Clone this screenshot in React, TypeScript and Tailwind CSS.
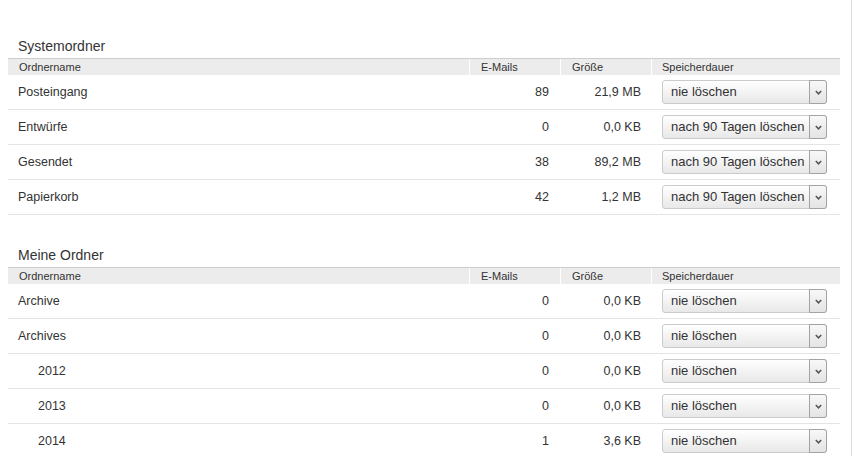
import { ChangeEvent, useState } from "react";

type Folder = {
  name: string;
  mails: number;
  size: string;
  retention: string;
  depth?: number;
};

const RETENTION_OPTIONS = [
  "nie löschen",
  "nach 30 Tagen löschen",
  "nach 90 Tagen löschen",
  "nach 180 Tagen löschen",
];

const systemFolders: Folder[] = [
  { name: "Posteingang", mails: 89, size: "21,9 MB", retention: "nie löschen" },
  { name: "Entwürfe", mails: 0, size: "0,0 KB", retention: "nach 90 Tagen löschen" },
  { name: "Gesendet", mails: 38, size: "89,2 MB", retention: "nach 90 Tagen löschen" },
  { name: "Papierkorb", mails: 42, size: "1,2 MB", retention: "nach 90 Tagen löschen" },
];

const myFolders: Folder[] = [
  { name: "Archive", mails: 0, size: "0,0 KB", retention: "nie löschen" },
  { name: "Archives", mails: 0, size: "0,0 KB", retention: "nie löschen" },
  { name: "2012", mails: 0, size: "0,0 KB", retention: "nie löschen", depth: 1 },
  { name: "2013", mails: 0, size: "0,0 KB", retention: "nie löschen", depth: 1 },
  { name: "2014", mails: 1, size: "3,6 KB", retention: "nie löschen", depth: 1 },
];

const COLS = "grid grid-cols-[461px_91px_91px_189px]";

function RetentionSelect({ initial }: { initial: string }) {
  const [value, setValue] = useState(initial);

  return (
    <div className="relative h-[24px] w-[165px]">
      <select
        value={value}
        onChange={(e: ChangeEvent<HTMLSelectElement>) => setValue(e.target.value)}
        className="h-full w-full appearance-none rounded-[3px] border border-[#cbcbcb] bg-linear-to-b from-white to-[#e8e8e8] pl-[8px] pr-[20px] text-[13px] text-[#333] outline-none"
      >
        {RETENTION_OPTIONS.map((opt) => (
          <option key={opt}>{opt}</option>
        ))}
      </select>
      {/* dropdown button drawn over the right edge */}
      <span className="pointer-events-none absolute top-0 right-0 bottom-0 flex w-[18px] items-center justify-center rounded-r-[3px] border border-[#a3a3a3] bg-linear-to-b from-[#f8f8f8] to-[#e4e4e4]">
        <svg width="7" height="5" viewBox="0 0 7 5" fill="none">
          <path d="M0.8 0.9 L3.5 3.8 L6.2 0.9" stroke="#555" strokeWidth="1.5" />
        </svg>
      </span>
    </div>
  );
}

function FolderTable({ title, folders, className }: { title: string; folders: Folder[]; className?: string }) {
  return (
    <section className={className}>
      <h2 className="mb-[2px] pl-[10px] text-[14px] leading-[20px] font-normal text-[#333]">{title}</h2>

      <div className={`${COLS} h-[17px] border-t border-[#cdcdcd] bg-[#ececec] text-[11px] leading-[16px] text-[#333]`}>
        <div className="pl-[11px]">Ordnername</div>
        <div className="border-l border-white pl-[11px]">E-Mails</div>
        <div className="border-l border-white pl-[11px]">Größe</div>
        <div className="border-l border-white pl-[10px]">Speicherdauer</div>
      </div>

      {folders.map((f) => (
        <div
          key={f.name}
          className={`${COLS} h-[35px] items-center border-b border-[#e4e4e4] text-[12.5px] text-[#333]`}
        >
          <div className={f.depth ? "pl-[30px]" : "pl-[10px]"}>{f.name}</div>
          <div className="pr-[11px] text-right">{f.mails}</div>
          <div className="pr-[10px] text-right">{f.size}</div>
          <div className="pl-[11px]">
            <RetentionSelect initial={f.retention} />
          </div>
        </div>
      ))}
    </section>
  );
}

export default function App() {
  return (
    <div
      className="h-[456px] w-[853px] overflow-hidden bg-white"
      style={{ fontFamily: '"Liberation Sans", Arial, sans-serif' }}
    >
      <div className="h-full w-[852px] border-r border-[#dadada] pt-[36px] pl-[8px]">
        <div className="w-[832px]">
          <FolderTable title="Systemordner" folders={systemFolders} />
          <FolderTable title="Meine Ordner" folders={myFolders} className="mt-[30px]" />
        </div>
      </div>
    </div>
  );
}
